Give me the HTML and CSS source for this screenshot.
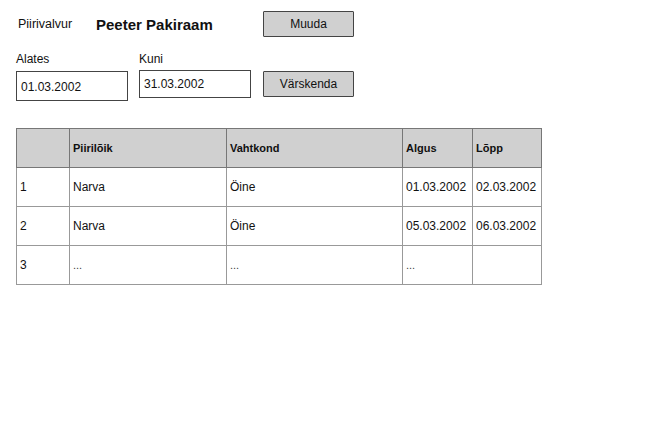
FILE: index.html
```html
<!DOCTYPE html>
<html lang="et">
<head>
    <meta charset="UTF-8">
    <title>Piirivalvur</title>
    <link rel="stylesheet" href="styles.css">
</head>
<body>
    <div class="page">
        <div class="head-row">
            <span class="role">Piirivalvur</span>
            <span class="name">Peeter Pakiraam</span>
            <button class="btn">Muuda</button>
        </div>
        <div class="filter">
            <label class="lbl">Alates</label>
            <label class="lbl">Kuni</label>
            <span></span>
            <div class="field">01.03.2002</div>
            <div class="field field-up">31.03.2002</div>
            <button class="btn">Värskenda</button>
        </div>
        <table class="grid">
            <colgroup>
                <col style="width:53px">
                <col style="width:157px">
                <col style="width:176px">
                <col style="width:70px">
                <col style="width:69px">
            </colgroup>
            <thead>
                <tr><th></th><th>Piirilõik</th><th>Vahtkond</th><th>Algus</th><th>Lõpp</th></tr>
            </thead>
            <tbody>
                <tr><td>1</td><td>Narva</td><td>Öine</td><td>01.03.2002</td><td>02.03.2002</td></tr>
                <tr><td>2</td><td>Narva</td><td>Öine</td><td>05.03.2002</td><td>06.03.2002</td></tr>
                <tr><td>3</td><td class="dots">...</td><td class="dots">...</td><td class="dots">...</td><td></td></tr>
            </tbody>
        </table>
    </div>
</body>
</html>
```
FILE: styles.css
```css
body {
    margin: 0;
    background: #fff;
    font-family: "Liberation Sans", Arial, sans-serif;
    color: #111;
}
.page {
    padding: 11px 0 0 16px;
}
.head-row {
    display: flex;
    align-items: center;
    height: 26px;
}
.role {
    width: 78px;
    padding-left: 2px;
    font-size: 12.5px;
}
.name {
    width: 167px;
    font-size: 15px;
    font-weight: bold;
}
.btn {
    width: 91px;
    height: 26px;
    background: #d0d0d0;
    border: 1.5px solid #444;
    border-radius: 1px;
    font-family: inherit;
    font-size: 12px;
    color: #111;
    padding: 0;
}
.filter {
    display: grid;
    grid-template-columns: 123px 124px 91px;
    grid-template-rows: 21px 30px;
    row-gap: 5px;
    margin-top: 8px;
    align-items: end;
}
.lbl {
    font-size: 12px;
}
.field {
    width: 106px;
    height: 26px;
    border: 1.5px solid #444;
    font-size: 12px;
    display: flex;
    align-items: center;
    padding-left: 4px;
    padding-top: 2px;
    box-sizing: content-box;
    align-self: start;
}
.field-up {
    margin-top: -1px;
    padding-top: 0;
}
.filter .btn {
    align-self: start;
}
.grid {
    margin-top: 27px;
    border-collapse: collapse;
    table-layout: fixed;
    width: 525px;
    font-size: 12px;
}
.grid th, .grid td {
    border: 1px solid #999;
    height: 38px;
    padding: 0 3px;
    text-align: left;
    white-space: nowrap;
}
.grid th {
    background: #d0d0d0;
    font-size: 11px;
    font-weight: bold;
    border-color: #777;
}
.grid thead tr {
    border: 1.5px solid #666;
}
.dots {
    font-size: 11px;
    color: #444;
}
```
